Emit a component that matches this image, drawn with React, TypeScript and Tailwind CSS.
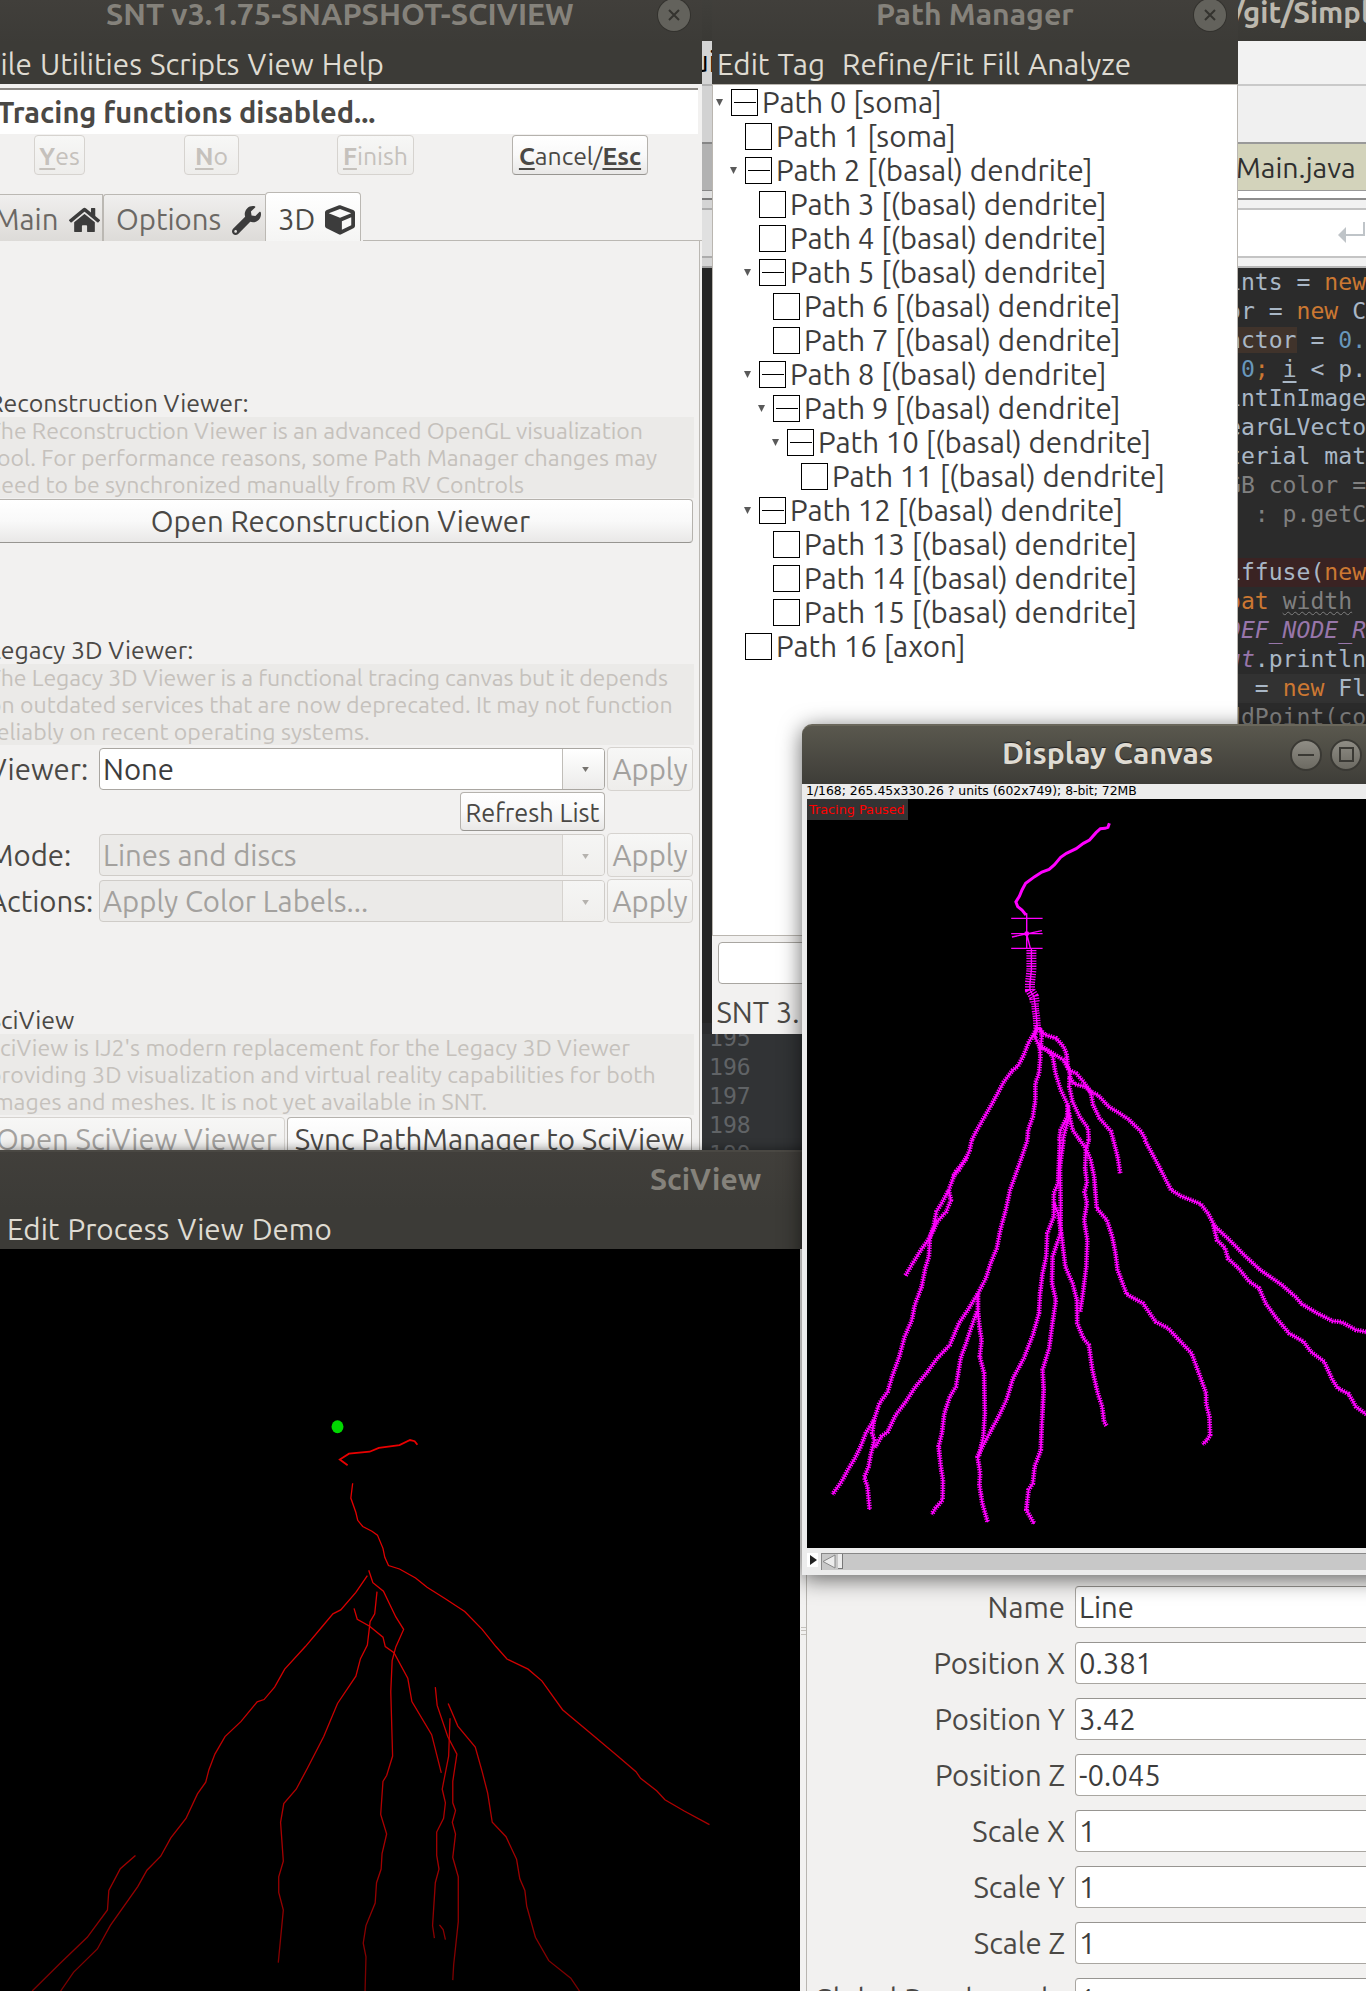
import type { ReactNode } from "react";
import { FaCube, FaHome, FaWrench } from "react-icons/fa";

type TreeNode = { level: number; name: string; open?: boolean };

const TREE: TreeNode[] = [
  { level: 0, name: "Path 0 [soma]", open: true },
  { level: 1, name: "Path 1 [soma]" },
  { level: 1, name: "Path 2 [(basal) dendrite]", open: true },
  { level: 2, name: "Path 3 [(basal) dendrite]" },
  { level: 2, name: "Path 4 [(basal) dendrite]" },
  { level: 2, name: "Path 5 [(basal) dendrite]", open: true },
  { level: 3, name: "Path 6 [(basal) dendrite]" },
  { level: 3, name: "Path 7 [(basal) dendrite]" },
  { level: 2, name: "Path 8 [(basal) dendrite]", open: true },
  { level: 3, name: "Path 9 [(basal) dendrite]", open: true },
  { level: 4, name: "Path 10 [(basal) dendrite]", open: true },
  { level: 5, name: "Path 11 [(basal) dendrite]" },
  { level: 2, name: "Path 12 [(basal) dendrite]", open: true },
  { level: 3, name: "Path 13 [(basal) dendrite]" },
  { level: 3, name: "Path 14 [(basal) dendrite]" },
  { level: 3, name: "Path 15 [(basal) dendrite]" },
  { level: 1, name: "Path 16 [axon]" },
];

const PROPS: [string, string][] = [
  ["Name", "Line"],
  ["Position X", "0.381"],
  ["Position Y", "3.42"],
  ["Position Z", "-0.045"],
  ["Scale X", "1"],
  ["Scale Y", "1"],
  ["Scale Z", "1"],
  ["Global Renderscale", "1"],
];

const UPPER_DENDRITES = [
  "657,740 646,765 632,790 620,825 604,858 588,872 565,905 545,945 530,975 505,1022 485,1060 476,1080",
  "657,745 650,770 664,800 666,830 662,880 652,910 652,960 645,1010 632,1050 630,1080",
  "664,745 670,765 666,810",
  "668,800 690,815 700,830 708,880 722,930 742,975 740,1010 722,1050 718,1080",
  "742,975 745,1010 735,1050 728,1080",
  "745,1000 755,1050 775,1080",
  "660,745 680,765 710,775 730,800 738,820 742,860 748,880 746,920 755,965 775,1010 798,1045 800,1080",
  "668,800 700,820 730,840 745,870 765,880 785,905 805,935 825,945 855,980 885,1000 910,1018 945,1055 958,1080",
  "745,890 760,912 790,920 805,935",
  "805,935 812,975 830,1015 862,1055 868,1080",
];

const LOWER_DENDRITES = [
  "476,0 470,30 458,60 432,95 424,115 412,150 395,185 378,215 370,260 360,290 357,350 347,385 337,440 318,495 310,540 290,590 275,650 255,710 243,755 220,790 205,840 182,880 168,920 152,955 135,985 115,1025 90,1063",
  "205,840 200,880 206,900 196,945 190,980 178,1012 187,1040 193,1110",
  "462,50 440,90 422,110",
  "412,150 418,180 405,215 380,245 370,270 355,300 335,330 312,370 292,407",
  "630,0 618,40 600,95 582,150 570,210 555,270 545,325 528,370 515,415 493,460 465,510 440,550 415,615 380,655 350,700 320,740 290,790 265,825 243,875 225,890 208,922",
  "493,460 493,515 497,560 503,600 498,650 510,700 512,820 508,890 495,950",
  "490,515 472,570 460,610 445,655 432,740 415,770 400,820 393,880 384,920 390,980 396,1020 395,1080 375,1105 365,1123",
  "720,0 715,130 703,160 703,230 685,280 682,350 672,400 665,460 662,520 645,585 620,655 590,715 572,780 550,830 530,870 510,910 492,950 499,1000 497,1035 505,1090 520,1147",
  "730,0 720,80 722,190 722,280 712,310 700,350 698,430 709,480 700,545 690,625 672,690 675,750 670,850 667,930 650,980 645,1030 633,1050 627,1110 649,1152",
  "703,190 715,220 725,290 735,380 755,430 767,480 768,550 785,595 800,615 810,690 825,760 837,800 842,845 849,857",
  "800,0 792,30 790,85 795,130 788,155 795,190 787,240 796,300 793,380 785,450 776,515",
  "775,0 792,25 805,60 815,110 822,205 850,240 865,290 874,340 880,390 905,463 950,490 985,545 1020,565 1050,600 1085,640 1105,700 1125,760 1125,790 1134,830 1136,885 1128,900 1115,913",
  "868,0 880,50 887,100",
  "955,0 985,60 1028,150 1055,168 1110,192 1130,220 1150,260 1185,295 1235,350 1275,390 1335,435 1372,470 1390,492 1430,518 1475,543 1500,546 1540,570 1580,578",
  "1145,255 1155,300 1178,325 1185,355 1215,385 1245,425 1272,445 1290,490 1320,535 1355,580 1395,605 1415,635 1452,665 1475,720 1490,745 1520,762 1540,800 1580,832",
];

const RED_PATHS = [
  "768,265 764,303 775,340 779,360 790,376 810,388 822,398 834,432 838,455 846,476 870,485 905,508 930,532 968,560 1012,594 1050,640 1080,684 1104,716 1150,742 1180,772 1225,846 1290,910 1345,965 1385,1005 1395,1022 1430,1054 1448,1077 1490,1106 1545,1141",
  "800,502 775,545 742,590 725,600 700,635 665,684 620,742 598,788 575,820 560,826 525,876 490,915 468,960 455,1000 448,1032 430,1062 405,1125 372,1175 350,1222 320,1258 300,1300 240,1400 212,1460 160,1520 132,1568",
  "295,1220 262,1254 237,1310 234,1360 190,1430 130,1498 70,1568",
  "803,488 812,520 835,542 862,608 879,640 862,685 854,720 851,800 855,965 842,1015 834,1030 829,1115 842,1165 832,1215 830,1255 820,1290 817,1342 797,1400 791,1445 797,1480 795,1568",
  "821,543 816,600 806,620 800,680 785,715 775,760 735,830 705,915 670,995 645,1050 618,1087 611,1135 617,1235 607,1275 607,1315 617,1360 606,1495",
  "771,586 778,614 805,632 834,660 839,684 858,700 888,765 897,825 940,910 961,1008",
  "948,788 952,835 975,915 995,960 986,1030 986,1085 992,1105 985,1135 992,1165 986,1225 998,1275 998,1390 988,1500 986,1540",
  "976,830 997,888 1035,942 1050,1005 1062,1060 1072,1135 1102,1172 1125,1230 1132,1280 1143,1310 1147,1350 1166,1430 1195,1490 1243,1535 1262,1568",
  "980,868 977,965 963,1050 970,1085 966,1125 951,1160 951,1220 956,1255 948,1290 942,1400 946,1432",
  "957,1398 965,1410 970,1436",
];

const U = "underline underline-offset-[3px] decoration-[1.5px] font-bold";

function CloseButton() {
  return (
    <span className="flex size-8 shrink-0 items-center justify-center rounded-full bg-[#63625c] shadow-[0_0_0_1px_#33322e]">
      <svg viewBox="0 0 12 12" className="size-3 stroke-[#34332f]" strokeWidth="2">
        <path d="M1 1l10 10M11 1L1 11" />
      </svg>
    </span>
  );
}

function Button({ children, className = "", off = false }: { children: ReactNode; className?: string; off?: boolean }) {
  return (
    <span
      className={`flex shrink-0 items-center justify-center whitespace-pre rounded-[4px] border bg-linear-to-b pt-[2px] ${
        off
          ? "border-[#d6d3cf] from-[#f7f7f6] to-[#eeedeb]"
          : "border-[#b5b2ad] border-b-[#979591] from-white via-[#f9f9f9] to-[#e9e8e7] text-[#4a4845]"
      } ${className}`}
    >
      {children}
    </span>
  );
}

function Combo({ value, off = false }: { value: string; off?: boolean }) {
  return (
    <div
      className={`flex h-[42px] w-[506px] overflow-hidden rounded-[4px] border ${
        off ? "border-[#cfccc8] bg-[#ebeae8] text-[#a3a19e]" : "border-[#a9a6a1] bg-white text-[#3c3c3c]"
      }`}
    >
      <span className="flex flex-1 items-center whitespace-pre pl-[3px] pt-[2px]">{value}</span>
      <span
        className={`flex w-[42px] items-center justify-center border-l bg-linear-to-b ${
          off ? "border-[#d6d3cf] from-[#f5f5f4] to-[#f0efed]" : "border-[#c0bdb8] from-white to-[#ecebea]"
        }`}
      >
        <svg viewBox="0 0 8 6" className={`ml-1 mt-0.5 h-[5px] w-[7px] ${off ? "fill-[#b5b2ae]" : "fill-[#76736f]"}`}>
          <path d="M0 0h8L4 6z" />
        </svg>
      </span>
    </div>
  );
}

function Description({ lines }: { lines: [string, string][] }) {
  return (
    <div className="w-[706px] bg-[#ebeae8] text-[23.08px] leading-[27px] text-[#c5c1bc]">
      {lines.map(([text, tracking]) => (
        <div key={text} className={`whitespace-pre ${tracking}`}>
          {text}
        </div>
      ))}
    </div>
  );
}

function SectionLabel({ children }: { children: ReactNode }) {
  return <div className="h-[30px] whitespace-pre text-[24.9px] leading-[32px] text-[#4a4845]">{children}</div>;
}

function SntWindow() {
  return (
    <section className="absolute left-0 top-0 flex h-[1160px] w-[702px] flex-col overflow-hidden bg-[#f2f1f0] text-[#4a4845]">
      <header className="flex h-[84px] shrink-0 flex-col bg-[#3c3b37]">
        <div className="flex h-[43px] items-start bg-linear-to-b from-[#413f3b] to-[#3c3b37]">
          <h1 className="ml-[106px] h-7 w-[552px] whitespace-pre text-[30.4px] font-bold leading-7 text-[#85827b]">
            SNT v3.1.75-SNAPSHOT-SCIVIEW
          </h1>
          <div className="-mt-px">
            <CloseButton />
          </div>
        </div>
        <nav className="-ml-[15px] flex h-[41px] items-center gap-[8px] pt-[2px] text-[29.6px] text-[#dfdbd2]">
          <span className="w-[47px]">File</span>
          <span>Utilities</span>
          <span>Scripts</span>
          <span>View</span>
          <span>Help</span>
        </nav>
      </header>
      <div className="mt-1 flex h-[46px] w-[698px] shrink-0 items-center border-t-2 border-[#8b8884] bg-white">
        <span className="-ml-[3px] whitespace-pre text-[29px] font-bold">Tracing functions disabled...</span>
      </div>
      <div className="mt-px flex h-10 shrink-0 pl-[34px] text-[24.8px]">
        <Button off className="w-[51px] text-[#c5c1bc]">
          <span><span className={U}>Y</span>es</span>
        </Button>
        <Button off className="ml-[99px] w-[55px] text-[#c5c1bc]">
          <span><span className={U}>N</span>o</span>
        </Button>
        <Button off className="ml-[98px] w-[77px] text-[#c5c1bc]">
          <span><span className={U}>F</span>inish</span>
        </Button>
        <Button className="ml-[98px] w-[136px]">
          <span><span className={U}>C</span>ancel/<span className={U}>Esc</span></span>
        </Button>
      </div>
      <div className="mt-[17px] flex h-[49px] shrink-0 items-end text-[#6b6864]">
        <div className="flex h-[47px] w-[103px] items-center border-r border-t border-[#bbb8b3] bg-linear-to-b from-[#f0efee] to-[#dddbd8] pt-[4px]">
          <span className="-ml-[6px] w-[75px]">Main</span>
          <FaHome className="h-[28px] w-[31px] text-[#3c3c3c]" />
        </div>
        <div className="flex h-[47px] w-[162px] items-center rounded-tl-[3px] border-l border-t border-[#bbb8b3] bg-linear-to-b from-[#f0efee] to-[#dddbd8] pt-[4px]">
          <span className="ml-[12px] w-[116px]">Options</span>
          <FaWrench className="size-[29px] text-[#3c3c3c]" />
        </div>
        <div className="flex h-[49px] w-[96px] items-center rounded-t-[4px] border-x border-t border-[#bbb8b3] bg-linear-to-b from-white to-[#f5f5f4] pt-[5px] text-[#4a4845]">
          <span className="ml-[12px] w-[47px]">3D</span>
          <FaCube className="size-[30px] text-[#3c3c3c]" />
        </div>
      </div>
      <div className="-mt-px h-px w-[339px] shrink-0 self-end bg-[#bbb8b3]" />
      <div className="-ml-[12px] flex w-[712px] flex-1 flex-col border-r border-[#bbb8b3]">
        <div className="h-[146px] shrink-0" />
        <SectionLabel>Reconstruction Viewer:</SectionLabel>
        <Description
          lines={[
            ["The Reconstruction Viewer is an advanced OpenGL visualization", "tracking-[-0.04px]"],
            ["tool. For performance reasons, some Path Manager changes may", "tracking-[0.02px]"],
            ["need to be synchronized manually from RV Controls", "tracking-[0.02px]"],
          ]}
        />
        <Button className="mt-px h-[44px] w-[705px]">Open Reconstruction Viewer</Button>
        <div className="h-[91px] shrink-0" />
        <SectionLabel>Legacy 3D Viewer:</SectionLabel>
        <Description
          lines={[
            ["The Legacy 3D Viewer is a functional tracing canvas but it depends", "tracking-[-0.07px]"],
            ["on outdated services that are now deprecated. It may not function", "tracking-normal"],
            ["reliably on recent operating systems.", "tracking-[0.03px]"],
          ]}
        />
        <div className="mt-[1.5px] flex h-[44px] items-center">
          <span className="w-[111px] pt-[2px]">Viewer:</span>
          <Combo value="None" />
          <Button off className="ml-0.5 h-[44px] w-[86px] text-[#a3a19e]">Apply</Button>
        </div>
        <div className="mt-[1.5px] flex h-[39px] pl-[472px]">
          <Button className="w-[145px] text-[25.3px]">Refresh List</Button>
        </div>
        <div className="mt-0.5 flex h-[44px] items-center">
          <span className="w-[111px] pt-[2px]">Mode:</span>
          <Combo off value="Lines and discs" />
          <Button off className="ml-0.5 h-[44px] w-[86px] text-[#a3a19e]">Apply</Button>
        </div>
        <div className="mt-0.5 flex h-[44px] items-center">
          <span className="w-[111px] pt-[2px]">Actions:</span>
          <Combo off value="Apply Color Labels..." />
          <Button off className="ml-0.5 h-[44px] w-[86px] text-[#a3a19e]">Apply</Button>
        </div>
        <div className="h-[81px] shrink-0" />
        <SectionLabel>SciView</SectionLabel>
        <Description
          lines={[
            ["SciView is IJ2's modern replacement for the Legacy 3D Viewer", "tracking-normal"],
            ["providing 3D visualization and virtual reality capabilities for both", "tracking-[0.07px]"],
            ["images and meshes. It is not yet available in SNT.", "tracking-[0.02px]"],
          ]}
        />
        <div className="mt-[1.5px] flex h-[44px] gap-0.5">
          <Button off className="w-[297px] text-[#a3a19e]">Open SciView Viewer</Button>
          <Button className="w-[405px] text-[29.5px]">Sync PathManager to SciView</Button>
        </div>
      </div>
    </section>
  );
}

function Kw({ children }: { children: ReactNode }) {
  return <span className="text-[#cc7832]">{children}</span>;
}

function IdeWindow() {
  return (
    <section className="absolute left-[702px] top-0 flex h-[1160px] w-[664px] flex-col overflow-hidden bg-[#2b2b2b]">
      <div className="h-[41px] shrink-0 bg-linear-to-b from-[#403f3b] to-[#3a3935] pl-[530px] text-[29.3px] font-bold leading-[25px] text-[#bcb8ae]">
        /git/Simpl
      </div>
      <div className="h-[43px] shrink-0 bg-[#f2f2f2]">
        <span className="-ml-[10px] block pt-[4px] leading-[34px] text-black">ui</span>
      </div>
      <div className="h-[58px] shrink-0 border-t-2 border-[#c9c9c9] bg-[#f0f0f0]" />
      <div className="flex h-[49px] shrink-0 items-center border-b border-t-2 border-[#999] bg-[#d3d3bb] text-[28.5px] text-[#2f2f2f]">
        <span className="mr-[524px] h-full w-[10px] bg-[#cbcbcb]" />
        <span className="pt-px">Main.java</span>
      </div>
      <div className="h-[9px] shrink-0 border-b-2 border-[#8d8d8d] bg-white" />
      <div className="h-[8px] shrink-0 bg-[#f2f2f2]" />
      <div className="flex h-[50px] shrink-0 items-center border-y-2 border-[#c4c4c4] bg-white pl-[636px]">
        <svg viewBox="0 0 30 24" className="mt-0.5 h-6 w-[30px] shrink-0 fill-[#bfc4c8]">
          <path d="M0 13l8-8v7h17V0h2v14H8v7z" />
        </svg>
      </div>
      <div className="h-[10px] shrink-0 border-b-2 border-[#b8b8b8] bg-[#f2f2f2]" />
      <pre className="mt-[-1px] pl-[525px] pt-[0.5px] font-['DejaVu_Sans_Mono',monospace] text-[23.1px] leading-[29px] text-[#a9b7c6]">
        <div>ints = <Kw>new</Kw></div>
        <div>or = <Kw>new</Kw> C</div>
        <div><span className="bg-[#40332b]">actor</span> = <span className="text-[#6897bb]">0.</span></div>
        <div> <span className="text-[#6897bb]">0</span><Kw>;</Kw> <span className="underline underline-offset-4">i</span> &lt; p.</div>
        <div>intInImage</div>
        <div>earGLVecto</div>
        <div>terial mat</div>
        <div className="text-[#808080]">GB color =</div>
        <div className="text-[#808080]">{"  : p.getC"}</div>
        <div>{" "}</div>
        <div className="bg-[#3a2323]">iffuse(<Kw>new</Kw></div>
        <div><Kw>oat</Kw> <span className="text-[#808080] underline decoration-wavy decoration-1 underline-offset-2">width</span></div>
        <div className="italic text-[#9876aa]">DEF_NODE_R</div>
        <div><span className="italic text-[#9876aa]">ut</span>.println</div>
        <div className="bg-[#323232]">{"  = "}<Kw>new</Kw> Fl</div>
        <div className="text-[#808080]">ddPoint(co</div>
      </pre>
      <div className="mt-[291px] h-[200px] w-[100px] shrink-0 bg-[#313335] pl-[7px] pt-px font-['DejaVu_Sans_Mono',monospace] text-[23.1px] leading-[29px] text-[#606366]">
        <div>195</div>
        <div>196</div>
        <div>197</div>
        <div>198</div>
        <div>199</div>
      </div>
      <div className="absolute left-0 top-[41px] h-[993px] w-[10px] bg-black/12" />
    </section>
  );
}

function PathManager() {
  return (
    <section className="absolute left-[712px] top-0 flex h-[1034px] w-[526px] flex-col overflow-hidden bg-[#f2f1f0]">
      <header className="flex h-[84px] shrink-0 flex-col bg-[#3c3b37]">
        <div className="flex h-[43px] items-start bg-linear-to-b from-[#413f3b] to-[#3c3b37]">
          <h1 className="ml-[164px] h-7 w-[318px] whitespace-pre text-[30.2px] font-bold leading-7 text-[#85827b]">
            Path Manager
          </h1>
          <div className="-mt-px">
            <CloseButton />
          </div>
        </div>
        <nav className="flex h-[41px] items-center gap-[8px] pl-[5px] pt-[2px] text-[29.6px] text-[#dfdbd2]">
          <span>Edit</span>
          <span className="mr-[9px]">Tag</span>
          <span>Refine/Fit</span>
          <span>Fill</span>
          <span>Analyze</span>
        </nav>
      </header>
      <ul className="h-[852px] shrink-0 border border-[#bab6b0] bg-white text-[29.5px] text-[#3c3c3c]">
        {TREE.map((n) => (
          <li key={n.name} className="flex h-[34px] items-center" style={{ paddingLeft: 3 + n.level * 14 }}>
            <svg viewBox="0 0 7 7" className={`mr-2 size-[7px] fill-[#5a5a5a] ${n.open ? "" : "invisible"}`}>
              <path d="M0 0h7L3.5 7z" />
            </svg>
            <span className="mr-[4px] mt-px flex size-[27px] items-center justify-center border border-black">
              {n.open && <span className="h-px w-[22px] bg-black" />}
            </span>
            <span className="mt-px whitespace-pre">{n.name}</span>
          </li>
        ))}
      </ul>
      <div className="ml-[6px] mt-[6px] h-[42px] w-[500px] shrink-0 rounded-[4px] border border-[#a9a6a1] bg-white" />
      <div className="ml-[4.5px] mt-[11px] whitespace-pre leading-[36px] text-[#4a4845]">SNT 3.1.75</div>
    </section>
  );
}

function SciViewWindow() {
  return (
    <section className="absolute left-0 top-[1150px] flex h-[841px] w-[1366px] flex-col overflow-hidden bg-black shadow-[0_0_10px_rgba(0,0,0,0.45)]">
      <header className="flex h-[99px] shrink-0 flex-col bg-[#3c3b37]">
        <h1 className="h-[58px] border-t-2 border-[#4a4843] bg-linear-to-b from-[#413f3b] to-[#3c3b37] pl-[650px] text-[30px] font-bold leading-[55px] text-[#85827b]">
          SciView
        </h1>
        <nav className="flex h-[41px] items-center gap-[8px] pl-[7px] pt-[2px] text-[29.6px] text-[#dfdbd2]">
          <span>Edit</span>
          <span>Process</span>
          <span>View</span>
          <span>Demo</span>
        </nav>
      </header>
      <div className="flex flex-1">
        <svg viewBox="0 1249 800 742" className="h-[742px] w-[800px] shrink-0" fill="none">
          <defs>
            <linearGradient id="fade" gradientUnits="userSpaceOnUse" x1="0" y1="0" x2="0" y2="1568">
              <stop offset="0" stopColor="#f00000" />
              <stop offset="0.45" stopColor="#d40000" />
              <stop offset="0.75" stopColor="#a80000" />
              <stop offset="1" stopColor="#780000" />
            </linearGradient>
          </defs>
          <g transform="translate(0 1380) scale(0.4592 0.3897)" stroke="url(#fade)">
            <ellipse cx="735" cy="120" rx="13" ry="16.5" fill="#00d800" stroke="none" />
            <polyline points="757,219 740,204 760,189 805,184 825,174 870,167 893,154 903,157 909,166" strokeWidth="1.8" vectorEffect="non-scaling-stroke" />
            {RED_PATHS.map((p) => (
              <polyline key={p} points={p} strokeWidth="1.3" vectorEffect="non-scaling-stroke" />
            ))}
          </g>
        </svg>
        <div className="flex w-[7px] shrink-0 flex-col items-center border-r border-[#b8b5b0] bg-[#f2f1f0] pt-[378px]">
          <span className="h-[8px] w-[5px] border-y border-[#c5c2bd]" />
          <span className="mt-[-5px] h-px w-[5px] bg-[#c5c2bd]" />
        </div>
        <div className="flex w-[559px] shrink-0 flex-col gap-[14px] overflow-hidden bg-[#f2f1f0] pt-[337px] text-[#4a4845]">
          {PROPS.map(([label, value]) => (
            <div key={label} className="flex h-[42px] shrink-0 items-center">
              <span className="w-[258px] shrink-0 whitespace-pre pt-[2px] text-right">{label}</span>
              <span className="ml-[10px] flex h-[42px] w-[320px] shrink-0 items-center rounded-[4px] border border-[#a9a6a1] border-t-[#979591] bg-white pl-[3px] pt-[2px] text-[#3c3c3c]">
                {value}
              </span>
            </div>
          ))}
        </div>
      </div>
    </section>
  );
}

function Branches({ lines, transform }: { lines: string[]; transform: string }) {
  return (
    <g transform={transform}>
      {lines.map((p) => (
        <g key={p}>
          <polyline points={p} strokeWidth="1.7" vectorEffect="non-scaling-stroke" />
          <polyline points={p} strokeWidth="4.8" strokeDasharray="1.3 1.2" vectorEffect="non-scaling-stroke" />
        </g>
      ))}
    </g>
  );
}

function DisplayCanvas() {
  return (
    <section className="absolute left-[802px] top-[724px] flex h-[851px] w-[600px] flex-col rounded-t-[10px] bg-[#ececec] shadow-[0_4px_22px_rgba(0,0,0,0.6)]">
      <header className="flex h-[60px] shrink-0 items-center rounded-t-[10px] border-t-2 border-[#6a675b] bg-linear-to-b from-[#5a584e] to-[#3e3d38]">
        <h1 className="ml-[200px] w-[288px] whitespace-pre pb-[3px] text-[30.2px] font-bold text-[#dfdbd2] [text-shadow:0_-1px_1px_#222]">
          Display Canvas
        </h1>
        <span className="mb-px flex size-8 items-center justify-center rounded-full border-2 border-[#3a3934] bg-linear-to-b from-[#8f8d85] to-[#6c6a62]">
          <span className="h-0.5 w-4 bg-[#3a3934]" />
        </span>
        <span className="mb-px ml-2 flex size-8 items-center justify-center rounded-full border-2 border-[#3a3934] bg-linear-to-b from-[#8f8d85] to-[#6c6a62]">
          <span className="size-[15px] border-2 border-[#3a3934]" />
        </span>
      </header>
      <div className="h-[15px] shrink-0 whitespace-pre pl-[4px] font-['DejaVu_Sans',sans-serif] text-[12.4px] leading-[13px] text-black">
        1/168; 265.45x330.26 ? units (602x749); 8-bit; 72MB
      </div>
      <div className="relative ml-[5px] h-[749px] w-[559px] shrink-0 bg-black">
        <svg viewBox="807 799 559 749" className="block h-[749px] w-[559px]" fill="none" stroke="#ff00ff">
          <g transform="translate(800 780) scale(0.361 0.33333)">
            <polyline
              points="857,130 853,142 845,145 832,146 820,158 802,180 785,190 765,206 738,220 722,232 705,254 690,268 670,276 650,290 625,310 615,330 608,348 598,366 603,380 615,390 626,405"
              strokeWidth="3"
              vectorEffect="non-scaling-stroke"
            />
            <path
              d="M628 400V505M585 415H672M585 461H672M585 505H672M587 471L670 452M628 461L638 505M641 505V570L637 610V630L648 650L652 680L655 710L657 745"
              strokeWidth="1.4"
              vectorEffect="non-scaling-stroke"
            />
            <circle cx="628" cy="461" r="7" fill="#ff00ff" stroke="none" />
            <polyline points="641,510 641,570 637,610 637,630 648,650 651,670" strokeWidth="10" strokeDasharray="1.3 1.3" vectorEffect="non-scaling-stroke" />
            <polyline points="651,670 652,690 655,710 657,745" strokeWidth="7.5" strokeDasharray="1.3 1.1" vectorEffect="non-scaling-stroke" />
          </g>
          <Branches lines={UPPER_DENDRITES} transform="translate(800 780) scale(0.361 0.33333)" />
          <Branches lines={LOWER_DENDRITES} transform="translate(800 1140) scale(0.361 0.33333)" />
        </svg>
        <div className="absolute left-0 top-0 h-[21px] w-[101px] whitespace-pre bg-[#333] pl-[2px] font-['DejaVu_Sans',sans-serif] text-[12.8px] leading-[21px] text-[#f00]">
          Tracing Paused
        </div>
      </div>
      <div className="ml-[5px] mt-[5px] flex h-[17px] gap-[3px]">
        <span className="flex h-[14px] w-[11px] items-center bg-white pl-[3px]">
          <svg viewBox="0 0 7 10" className="h-[10px] w-[7px] fill-[#222]">
            <path d="M0 0l7 5-7 5z" />
          </svg>
        </span>
        <span className="flex h-[17px] flex-1 border-l border-t border-[#888] bg-[#c8c8c8]">
          <svg viewBox="0 0 14 15" className="h-[15px] w-[14px] fill-[#ececec] stroke-[#888]">
            <path d="M13 1v13L1 7.500z" />
          </svg>
          <span className="ml-[2px] h-[15px] w-[5px] border-b border-r border-[#777] bg-[#ececec]" />
        </span>
      </div>
    </section>
  );
}

export default function App() {
  return (
    <main className="relative h-[1991px] w-[1366px] overflow-hidden bg-[#2b2b2b] font-[Ubuntu,'Open_Sans',sans-serif] text-[29.33px] leading-none">
      <IdeWindow />
      <PathManager />
      <SntWindow />
      <SciViewWindow />
      <DisplayCanvas />
    </main>
  );
}
